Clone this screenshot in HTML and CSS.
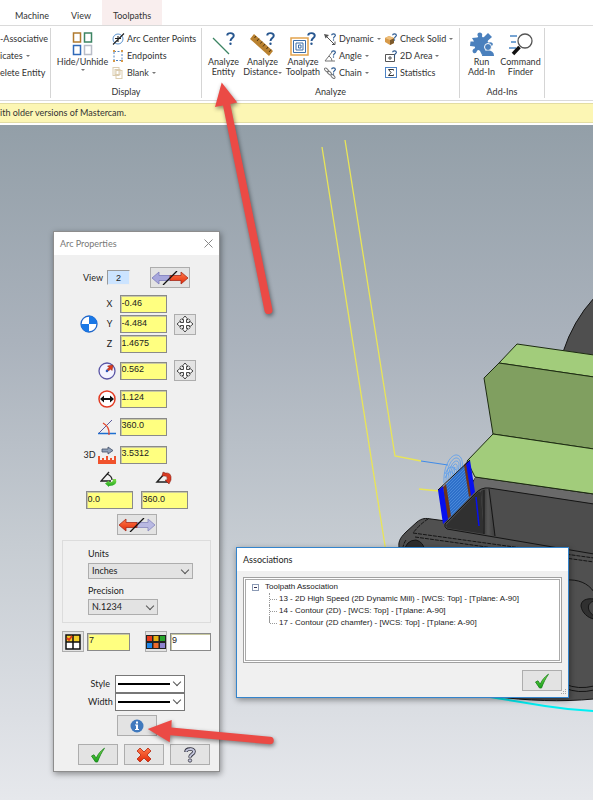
FILE: index.html
```html
<!DOCTYPE html>
<html lang="en">
<head>
    <meta charset="UTF-8">
    <meta name="viewport" content="width=device-width, initial-scale=1.0">
    <title>Mastercam - Arc Properties</title>
    <link rel="stylesheet" href="styles.css">
</head>
<body>
<!-- shared icons -->
<svg class="defs" width="0" height="0" aria-hidden="true">
    <defs>
        <linearGradient id="green" x1="0" y1="0" x2="0" y2="1">
            <stop offset="0" stop-color="#7fe04a"/><stop offset="1" stop-color="#16a01a"/>
        </linearGradient>
        <linearGradient id="red" x1="0" y1="0" x2="0" y2="1">
            <stop offset="0" stop-color="#ff7a4a"/><stop offset="1" stop-color="#e32a08"/>
        </linearGradient>
        <symbol id="question" viewBox="0 0 8 12">
            <path d="M1 3.2C1 0.4 7 0.2 7 3.4C7 5.4 4 5.6 4 8.2" fill="none" stroke="#27568f" stroke-width="1.8"/>
            <circle cx="4" cy="10.8" r="1.1" fill="#27568f"/>
        </symbol>
        <symbol id="check" viewBox="0 0 16 16">
            <path d="M1.5 9L4 7.8L6.2 11.2C8 7 10.500 4 14.500 1.200C11.500 5.500 9.500 9.500 7.500 15L5.500 15Z" fill="url(#green)" stroke="#17801a" stroke-width="0.8"/>
        </symbol>
        <symbol id="move" viewBox="0 0 18 18">
            <path d="M9 1L12 4.500H10.500V7.500H13.500V6L17 9L13.500 12V10.500H10.500V13.500H12L9 17L6 13.500H7.500V10.500H4.500V12L1 9L4.500 6V7.500H7.500V4.500H6Z" fill="#fff" stroke="#333" stroke-width="0.9"/>
            <path d="M3.500 5.500L5.500 3.500M12.500 3.500L14.500 5.500M3.500 12.500L5.500 14.500M12.500 14.500L14.500 12.500" stroke="#555" stroke-width="0.8"/>
        </symbol>
    </defs>
</svg>

<nav class="tabs">
    <button type="button" class="tab">Machine</button>
    <button type="button" class="tab">View</button>
    <button type="button" class="tab active">Toolpaths</button>
</nav>

<div class="ribbon">
    <section class="group group-delete">
        <div class="tools">
            <div class="stack">
                <button type="button" class="small">-Associative</button>
                <button type="button" class="small">icates <i class="caret"></i></button>
                <button type="button" class="small">elete Entity</button>
            </div>
        </div>
    </section>

    <section class="group group-display">
        <div class="tools">
            <button type="button" class="big big-hide">
                <svg width="22" height="24" viewBox="0 0 22 24" fill="#fff" stroke-width="1.500">
                    <rect x="1.500" y="1" width="7" height="9" stroke="#b07a2e"/>
                    <rect x="12.500" y="1" width="7" height="9" stroke="#3c8463"/>
                    <rect x="1.500" y="13.500" width="7" height="9" stroke="#2f69b8"/>
                    <rect x="12.500" y="13.500" width="7" height="9" stroke="#b9bdc8"/>
                </svg>
                <span>Hide/Unhide</span>
                <i class="caret"></i>
            </button>
            <div class="stack">
                <button type="button" class="small">
                    <svg width="13" height="12" viewBox="0 0 13 12" fill="none">
                        <circle cx="6" cy="6" r="5" stroke="#5b93cf"/>
                        <path d="M1 11.500L12 0.500M3 5.500H9M6 3V9" stroke="#222" stroke-width="1.100"/>
                    </svg>
                    Arc Center Points
                </button>
                <button type="button" class="small">
                    <svg width="13" height="12" viewBox="0 0 13 12" fill="none">
                        <rect x="2" y="1.500" width="8" height="9" stroke="#4c82c4" stroke-dasharray="2 1.500"/>
                        <path d="M1 0h2v2H1zM9 0h2v2H9zM1 10h2v2H1zM9 10h2v2H9z" fill="#d79a4a"/>
                    </svg>
                    Endpoints
                </button>
                <button type="button" class="small">
                    <svg width="13" height="12" viewBox="0 0 13 12" fill="none" stroke="#dccdb0">
                        <rect x="1" y="0.500" width="6" height="8"/>
                        <rect x="4" y="3.500" width="6" height="8"/>
                        <rect x="3" y="2.500" width="5" height="5"/>
                    </svg>
                    Blank <i class="caret"></i>
                </button>
            </div>
        </div>
        <h2>Display</h2>
    </section>

    <section class="group group-analyze">
        <div class="tools">
            <button type="button" class="big">
                <svg width="28" height="24" viewBox="0 0 28 24">
                    <path d="M3 6L19 22" stroke="#3c8463" stroke-width="1.300"/>
                    <use href="#question" x="16" y="0" width="9" height="13"/>
                </svg>
                <span>Analyze<br>Entity</span>
            </button>
            <button type="button" class="big">
                <svg width="28" height="24" viewBox="0 0 28 24">
                    <path d="M5 2L24 19L20 24L1 7Z" fill="#b9812f"/>
                    <path d="M7 4L5.500 6M10 6.500L8 9M13 9.500L11.500 11.500M16 12L14 14.500M19 15L17.500 17M22 17.500L20 20" stroke="#4a3210"/>
                    <use href="#question" x="17" y="0" width="9" height="13"/>
                </svg>
                <span>Analyze<br>Distance<i class="caret"></i></span>
            </button>
            <button type="button" class="big big-toolpath">
                <svg width="28" height="24" viewBox="0 0 28 24" fill="none">
                    <rect x="2" y="6" width="17" height="17" fill="#fff" stroke="#e3a44e" stroke-width="1.500"/>
                    <path d="M4.500 8.500H16.500V20.500H4.500ZM7 11H14V18H7ZM9.500 13H12V16H9.500Z" stroke="#3d6ea8"/>
                    <use href="#question" x="18" y="0" width="9" height="13"/>
                </svg>
                <span>Analyze<br>Toolpath</span>
            </button>
            <div class="stack stack-motion">
                <button type="button" class="small">
                    <svg width="13" height="12" viewBox="0 0 13 12">
                        <path d="M0 1L5 2L1.500 5.500Z" fill="#555"/>
                        <path d="M2 3L10 11M8 11.500H11V8.500" fill="none" stroke="#555"/>
                        <use href="#question" x="7" y="0" width="5" height="8"/>
                    </svg>
                    Dynamic <i class="caret"></i>
                </button>
                <button type="button" class="small">
                    <svg width="13" height="12" viewBox="0 0 13 12">
                        <path d="M8 2L1 11H11M5 6Q8 8 8 11" fill="none" stroke="#777"/>
                        <use href="#question" x="7" y="0" width="5" height="8"/>
                    </svg>
                    Angle <i class="caret"></i>
                </button>
                <button type="button" class="small">
                    <svg width="13" height="12" viewBox="0 0 13 12">
                        <g fill="none" stroke="#777">
                            <ellipse cx="2.500" cy="3" rx="2.500" ry="1.300" transform="rotate(45 2.500 3)"/>
                            <ellipse cx="5.500" cy="6" rx="2.500" ry="1.300" transform="rotate(45 5.500 6)"/>
                            <ellipse cx="9" cy="9.500" rx="2.500" ry="1.300" transform="rotate(45 9 9.500)"/>
                        </g>
                        <use href="#question" x="7" y="0" width="5" height="8"/>
                    </svg>
                    Chain <i class="caret"></i>
                </button>
            </div>
            <div class="stack">
                <button type="button" class="small">
                    <svg width="13" height="12" viewBox="0 0 13 12">
                        <path d="M0 5L4 3L9 5V10L5 12L0 9Z" fill="#d79a4a"/>
                        <path d="M5 7L9 5V10L5 12Z" fill="#7d5a2c"/>
                        <path d="M0 5L4 3L9 5L5 7Z" fill="#eebf7c"/>
                        <use href="#question" x="7" y="0" width="5" height="8"/>
                    </svg>
                    Check Solid <i class="caret"></i>
                </button>
                <button type="button" class="small">
                    <svg width="13" height="12" viewBox="0 0 13 12">
                        <path d="M0.500 4.500H9.500V11.500H0.500ZM5 6V10M3 8H7" fill="none" stroke="#555"/>
                        <use href="#question" x="7" y="0" width="5" height="8"/>
                    </svg>
                    2D Area <i class="caret"></i>
                </button>
                <button type="button" class="small">
                    <svg width="13" height="12" viewBox="0 0 13 12" fill="none">
                        <rect x="0.500" y="0.500" width="11" height="10" stroke="#4c82c4"/>
                        <path d="M8.500 3.500V2.500H3.500L6 5.500L3.500 8.500H8.500V7.500" stroke="#333"/>
                    </svg>
                    Statistics
                </button>
            </div>
        </div>
        <h2>Analyze</h2>
    </section>

    <section class="group group-addins">
        <div class="tools">
            <button type="button" class="big">
                <svg width="26" height="24" viewBox="0 0 26 24" fill="#4a80bd">
                    <path d="M3 6L8 5.500Q10 5 8.500 3.500Q8 0.500 11 0.500Q14 1 13 4Q13 6 15 5L19 1L23 5L19 8.500Q18 10.500 20 10.500Q23 9.500 24 12L23 14L18 14L16 20L13 23L11 19Q9 17 8 19Q7 22 4.500 21Q2.500 19 4.500 17Q7 16 5.500 14.500L1 14L1.500 9.500L5 9.500Z"/>
                    <circle cx="19" cy="15" r="3.500" stroke="#fff"/>
                    <path d="M13 24Q13 18.500 19 18.500Q25 18.500 25 24Z"/>
                </svg>
                <span>Run<br>Add-In</span>
            </button>
            <button type="button" class="big">
                <svg width="26" height="24" viewBox="0 0 26 24" fill="none">
                    <path d="M2 4H9M3 10H8M1 16H8" stroke="#4a86c5" stroke-width="1.500"/>
                    <circle cx="17" cy="9" r="7" fill="#fff" stroke="#555" stroke-width="1.300"/>
                    <path d="M11.500 15L5 22" stroke="#111" stroke-width="3.500"/>
                </svg>
                <span>Command<br>Finder</span>
            </button>
        </div>
        <h2>Add-Ins</h2>
    </section>
</div>

<p class="message">ith older versions of Mastercam.</p>

<main class="viewport">
    <svg class="scene" viewBox="0 125 593 675" preserveAspectRatio="xMinYMin slice" aria-hidden="true">
        <defs>
            <linearGradient id="bore" x1="0" x2="1">
                <stop offset="0" stop-color="#2b2b2b"/><stop offset="0.500" stop-color="#565656"/><stop offset="1" stop-color="#3d3d3d"/>
            </linearGradient>
            <pattern id="passes" width="3" height="3" patternUnits="userSpaceOnUse">
                <rect width="3" height="3" fill="#2d6fc9"/>
                <path d="M0 3L3 0" stroke="#5592e0" stroke-width="0.700"/>
            </pattern>
        </defs>
        <g fill="none" stroke="#e9e557" stroke-width="1.300">
            <path d="M322 147L386 552"/>
            <path d="M345 140L395 456L421 461"/>
            <path d="M419 489L439 491"/>
        </g>
        <path d="M421 461L448 465" stroke="#3f8be8"/>

        <g stroke="#151515" stroke-width="1">
            <path d="M594 298Q573 321 563 352L594 358Z" fill="#4f4f4f"/>
            <!-- casting -->
            <path d="M400 552C397 542 400 538 406 532L417 522C422 518 426 518 431 519L446 521L476 477L594 494V699C560 702 530 701 490 696L420 680Z" fill="#505050"/>
            <path d="M475 477L594 494V504L488 488Q481 487 476 492L470 497Z" fill="#6a6a6a" stroke="none"/>
            <path d="M445 524L475 494Q481 487 489 488L594 504V554L447 529Q444 527 445 524Z" fill="#4d4d4d"/>
            <path d="M446 525L476 494Q482 488 481 497L484 534L447 528Z" fill="#303030" stroke="none"/>
            <path d="M481 491Q486 487 491 490L495 536L484 534Z" fill="url(#bore)" stroke="none"/>
            <path d="M476 477L594 494M489 489L495 536M484 490L484 534" fill="none"/>
            <path d="M406 540Q402 546 403 552M413 533L594 558M415 537L594 562M428 519Q420 524 413 533" fill="none" stroke-dasharray="4 1"/>
            <path d="M404 552Q406 540 416 540Q424 542 425 552" fill="#2d2d2d"/>
            <path d="M565 580C578 579 588 583 594 592" fill="none"/>
            <path d="M594 599C587 598 581 600 581 606C582 613 588 618 594 619" fill="#303030"/>
            <path d="M594 601C587 603 586 610 594 616" fill="#494949"/>
            <path d="M565 684Q578 690 594 686M565 688Q578 694 594 690" fill="none"/>
        </g>

        <g stroke="#1d2b12" stroke-width="1">
            <path d="M517 344L594 355V377L499 363Z" fill="#a2cc7b"/>
            <path d="M499 363L594 377V449L493 434L484 378Z" fill="#809f60"/>
            <path d="M493 434L594 449V494L475 477L467 461Z" fill="#a2cc7b"/>
        </g>

        <!-- tool motion -->
        <g fill="none" stroke="#559cf0" stroke-width="0.800">
            <path d="M444 483C443 466 451 454 457 455C462 456 463 462 462 469"/>
            <path d="M446 482C446 468 452 457 457 458C461 459 461 464 460 471"/>
            <path d="M448 480C448 470 453 460 457 461C460 462 459 466 458 472"/>
            <path d="M450 478C450 470 454 463 456 464C458 465 457 469 456 474"/>
            <path d="M452 477C452 471 454 467 455 467L454 475"/>
            <path d="M445 474Q450 462 456 470M445 478Q449 468 454 474"/>
        </g>
        <path d="M443 487L467 462L473 494L448 520Z" fill="url(#passes)"/>
        <path d="M443 487L446 484L451 516L447 520ZM464 465L467 462L473 494L469 497Z" fill="#703418"/>
        <path d="M438 490L443 486L448 519L443 524ZM466 463L470 460L475 492L471 496Z" fill="#0710ee"/>
        <path d="M438 490L470 460" stroke="#111"/>
        <path d="M476 497L479 526" stroke="#0710ee" stroke-width="1.500"/>
        <path d="M490 697Q520 702 545 706T594 711" fill="none" stroke="#00f0f4" stroke-width="2"/>
    </svg>

    <form class="window arc-window">
        <header class="titlebar">
            <h1>Arc Properties</h1>
            <button type="button" class="close" aria-label="Close">
                <svg width="9" height="9" viewBox="0 0 9 9"><path d="M0.500 0.500L8.500 8.500M8.500 0.500L0.500 8.500" stroke="#888"/></svg>
            </button>
        </header>

        <div class="arc-body">
            <div class="view-row">
                <label for="view">View</label>
                <input class="view-input" id="view" value="2" readonly>
                <button type="button" class="btn" aria-label="Flip direction">
                    <svg width="38" height="14" viewBox="0 0 38 14">
                        <path d="M1 7L8 1V4.500H20V9.500H8V13Z" fill="#a7a7dc" stroke="#7b7bbb" stroke-width="0.800"/>
                        <path d="M37 7L30 1V4.500H19V9.500H30V13Z" fill="url(#red)" stroke="#a52a1a" stroke-width="0.800"/>
                        <path d="M12 14L26 0" stroke="#111" stroke-width="1.300"/>
                    </svg>
                </button>
            </div>

            <div class="fields">
                <svg class="origin" width="18" height="18" viewBox="0 0 18 18">
                    <circle cx="9" cy="9" r="8" fill="#fff" stroke="#1f66c9" stroke-width="1.300"/>
                    <path d="M9 9V1A8 8 0 0 1 17 9ZM9 9V17A8 8 0 0 1 1 9Z" fill="#1a78e6"/>
                </svg>
                <label class="axis" for="x">X</label>
                <input id="x" value="-0.46">
                <label class="axis" for="y">Y</label>
                <input id="y" value="-4.484">
                <label class="axis" for="z">Z</label>
                <input id="z" value="1.4675">
                <button type="button" class="btn btn-square move-point" aria-label="Move point">
                    <svg width="18" height="18"><use href="#move"/></svg>
                </button>
            </div>

            <div class="fields measures">
                <svg class="mark" width="18" height="18" viewBox="0 0 18 18">
                    <circle cx="9" cy="9" r="8" fill="#f4f4ff" stroke="#5a55a5" stroke-width="1.300"/>
                    <path d="M9 7.500L11 5.500L9.500 4L15 3L14 8.500L12.500 7L10.500 9Z" fill="#e03a1c" stroke="#81190c" stroke-width="0.500"/>
                    <circle cx="9" cy="9" r="1.300" fill="#3058b8"/>
                </svg>
                <input aria-label="Radius" value="0.562">
                <button type="button" class="btn btn-square" aria-label="Move radius">
                    <svg width="18" height="18"><use href="#move"/></svg>
                </button>

                <svg class="mark" width="18" height="18" viewBox="0 0 18 18">
                    <circle cx="9" cy="9" r="8" fill="#fff" stroke="#e23a22" stroke-width="1.500"/>
                    <path d="M2 9L6 5.500V8H12V5.500L16 9L12 12.500V10H6V12.500Z" fill="#111"/>
                </svg>
                <input aria-label="Diameter" value="1.124">

                <svg class="mark" width="18" height="18" viewBox="0 0 18 18" fill="none">
                    <path d="M0 15.500H18" stroke="#1e6fd0" stroke-width="1.500"/>
                    <path d="M1 15L14 2" stroke="#5d5a9c"/>
                    <path d="M5 5Q12 9 11 17" stroke="#e2442c" stroke-width="1.300"/>
                </svg>
                <input aria-label="Sweep angle" value="360.0">

                <label class="three-d" for="length">3D</label>
                <svg class="mark" width="18" height="18" viewBox="0 0 18 18">
                    <path d="M4 3H10V1L15 4.500L10 8V6H4Z" fill="#8fa0b8" stroke="#44506a" stroke-width="0.800"/>
                    <path d="M0 10H2V14H4V12H6V14H8V10H10V14H12V12H14V14H16V10H18V18H0Z" fill="#f0522c"/>
                </svg>
                <input id="length" value="3.5312">
            </div>

            <div class="angles">
                <div class="angle">
                    <svg width="18" height="16" viewBox="0 0 18 16">
                        <path d="M9 1L1 10H11M7 3Q12 5 12 9" fill="none" stroke="#222" stroke-width="1.300"/>
                        <path d="M16 8Q18 15 9 15L9 16L5 12.500L9 9.500V11Q13 12 13 8Z" fill="url(#green)"/>
                    </svg>
                    <input aria-label="Start angle" value="0.0">
                </div>
                <div class="angle">
                    <svg width="18" height="16" viewBox="0 0 18 16">
                        <path d="M10 2L2 11H13" fill="none" stroke="#222" stroke-width="1.500"/>
                        <path d="M7 5L8 1L10 2Q17 1 16 9L14 13L10 9H12Q13 5 10 5Z" fill="#d93a22" stroke="#7c1b10" stroke-width="0.500"/>
                    </svg>
                    <input aria-label="End angle" value="360.0">
                </div>
            </div>

            <button type="button" class="btn" aria-label="Reverse ends">
                <svg width="38" height="14" viewBox="0 0 38 14">
                    <path d="M37 7L30 1V4.500H18V9.500H30V13Z" fill="#b9b9e2" stroke="#8686bd" stroke-width="0.800"/>
                    <path d="M1 7L8 1V4.500H19V9.500H8V13Z" fill="url(#red)" stroke="#a52a1a" stroke-width="0.800"/>
                    <path d="M12 14L26 0" stroke="#111" stroke-width="1.300"/>
                </svg>
            </button>

            <fieldset class="options">
                <label for="units">Units</label>
                <div class="select select-units">
                    <select id="units"><option>Inches</option></select>
                </div>
                <label for="precision">Precision</label>
                <div class="select select-precision">
                    <select id="precision"><option>N.1234</option></select>
                </div>
            </fieldset>

            <div class="attributes">
                <button type="button" class="btn btn-square" aria-label="Level">
                    <svg width="16" height="16" viewBox="0 0 16 16">
                        <rect x="1" y="1" width="14" height="14" fill="#fff"/>
                        <path d="M1 1H15V8H1Z" fill="#f3cf2a"/>
                        <path d="M1 1H15V15H1ZM8 1V15M1 8H15" fill="none" stroke="#111" stroke-width="1.500"/>
                        <path d="M2 4L4 6L7 2" fill="none" stroke="#e2341c" stroke-width="1.800"/>
                    </svg>
                </button>
                <input aria-label="Level number" value="7">
                <button type="button" class="btn btn-square" aria-label="Color">
                    <svg width="20" height="14" viewBox="0 0 20 14">
                        <rect width="20" height="14" fill="#222"/>
                        <path d="M1 1h5v5H1z" fill="#e93a1c"/><path d="M7.500 1h5v5h-5z" fill="#e8b414"/><path d="M14 1h5v5h-5z" fill="#27a52b"/>
                        <path d="M1 8h5v5H1z" fill="#1f86e8"/><path d="M7.500 8h5v5h-5z" fill="#ee6a2a"/><path d="M14 8h5v5h-5z" fill="#8d83cf"/>
                    </svg>
                </button>
                <input class="plain" aria-label="Color number" value="9">
            </div>

            <div class="lines">
                <label for="style">Style</label>
                <div class="select select-line"><select id="style"><option></option></select></div>
                <label for="width">Width</label>
                <div class="select select-line"><select id="width"><option></option></select></div>
            </div>

            <button type="button" class="btn" aria-label="Associations">
                <svg width="14" height="14" viewBox="0 0 14 14">
                    <circle cx="7" cy="7" r="6.500" fill="#4079bd"/>
                    <path d="M6 2.500H8V4.500H6ZM5 5.500H8V10H9V11H5V10H6V6.500H5Z" fill="#fff"/>
                </svg>
            </button>

            <div class="actions">
                <button type="button" class="btn" aria-label="OK"><svg width="16" height="16"><use href="#check"/></svg></button>
                <button type="button" class="btn" aria-label="Cancel">
                    <svg width="16" height="16" viewBox="0 0 16 16">
                        <path d="M4 1L8 5L12 1L15 4L11 8L15 12L12 15L8 11L4 15L1 12L5 8L1 4Z" fill="url(#red)" stroke="#b5260f" stroke-width="0.800"/>
                    </svg>
                </button>
                <button type="button" class="btn" aria-label="Help">
                    <svg width="14" height="16" viewBox="0 0 14 16">
                        <path d="M3 5C3 1 11 1 11 4.500C11 7.500 7 7 7 10.500" fill="none" stroke="#33333f" stroke-width="3.600"/>
                        <path d="M3 4.700C3.500 1.300 11 1.300 11 4.500C11 7.500 7 7 7 10" fill="none" stroke="#c5c7dd" stroke-width="2"/>
                        <circle cx="7" cy="13.500" r="1.700" fill="#c5c7dd" stroke="#33333f" stroke-width="0.800"/>
                    </svg>
                </button>
            </div>
        </div>
    </form>

    <section class="window assoc-window">
        <header class="titlebar">
            <h1>Associations</h1>
        </header>
        <div class="assoc-body">
            <div class="tree">
                <div class="root"><i class="toggle"></i>Toolpath Association</div>
                <ul>
                    <li>13 - 2D High Speed (2D Dynamic Mill) - [WCS: Top] - [Tplane: A-90]</li>
                    <li>14 - Contour (2D) - [WCS: Top] - [Tplane: A-90]</li>
                    <li>17 - Contour (2D chamfer) - [WCS: Top] - [Tplane: A-90]</li>
                </ul>
            </div>
            <button type="button" class="btn" aria-label="OK"><svg width="16" height="16"><use href="#check"/></svg></button>
        </div>
        <svg class="grip" width="7" height="7" viewBox="0 0 7 7" fill="#a5a5a5">
            <path d="M5 0h1v1H5zM3 2h1v1H3zM5 2h1v1H5zM1 4h1v1H1zM3 4h1v1H3zM5 4h1v1H5z"/>
        </svg>
    </section>
</main>

<!-- callout arrows -->
<svg class="callouts" width="593" height="800" viewBox="0 0 593 800" fill="#eb4a45" aria-hidden="true">
    <path d="M221.700 82.500L237.300 102.500L230.300 104L272.300 309A4 4 0 0 1 264.500 311L223 105.500L215 107Z"/>
    <path d="M147.700 729L171.700 720L171.400 727.500L270 736.700A3.800 3.800 0 0 1 270 744.300L170.300 735.300L169.700 742.300Z"/>
</svg>
</body>
</html>
```
FILE: styles.css
```css
* {
    box-sizing: border-box;
}

body {
    margin: 0;
    min-height: 100vh;
    display: flex;
    flex-direction: column;
    position: relative;
    overflow-x: hidden;
    background-color: #fff;
    color: #333;
    font-family: Lato, "Open Sans", sans-serif;
    font-size: 9px;
    line-height: 10px;
}

.defs {
    position: absolute;
}

h1, h2, p, ul {
    margin: 0;
    padding: 0;
    font-size: inherit;
    font-weight: normal;
}

button, input, select {
    font: inherit;
    color: inherit;
    margin: 0;
    padding: 0;
    border: none;
    border-radius: 0;
    background: none;
}

svg {
    display: block;
    flex: none;
}

/* ribbon */
.tabs {
    display: flex;
    height: 26px;
    border-bottom: 1px solid #dadada;
}

.tab {
    padding: 7px 11px 0;
}

.tab:first-child {
    margin-left: 4px;
}

.tab.active {
    background-color: #f9eeee;
}

.ribbon {
    display: flex;
    height: 75px;
    padding: 2px 0;
    border-bottom: 1px solid #dadada;
}

.group {
    display: flex;
    flex-direction: column;
    justify-content: space-between;
    flex: none;
    height: 70px;
    padding-bottom: 1px;
    border-right: 1px solid #d5d5d5;
}

.group h2 {
    text-align: center;
}

.group-delete {
    width: 51px;
}

.group-display {
    width: 151px;
}

.group-analyze {
    width: 258px;
}

.group-addins {
    width: 85px;
}

.tools {
    display: flex;
    padding-top: 2px;
}

.group-display .tools {
    padding-left: 4px;
    gap: 2px;
}

.group-analyze .tools,
.group-addins .tools {
    padding-left: 2px;
}

.big {
    width: 39px;
    height: 52px;
    padding-top: 2px;
    display: flex;
    flex-direction: column;
    align-items: center;
    justify-content: flex-start;
    gap: 1px;
    white-space: nowrap;
}

.big-hide {
    width: 55px;
}

.big-toolpath {
    width: 42px;
}

.stack {
    display: flex;
    flex-direction: column;
    align-items: flex-start;
}

.stack-motion {
    width: 61px;
}

.small {
    display: flex;
    align-items: center;
    gap: 2px;
    height: 17px;
    white-space: nowrap;
}

.caret {
    display: inline-block;
    border: 2px solid transparent;
    border-top-color: #777;
    border-bottom: none;
    vertical-align: middle;
}

.small .caret {
    margin-left: 1px;
}

.big > .caret {
    margin-top: 1px;
}

.message {
    margin: 3px 0;
    height: 18px;
    line-height: 18px;
    background-color: #fcf6b4;
    outline: 1px solid #e3dda3;
}

/* graphics area */
.viewport {
    flex: 1;
    min-height: 675px;
    position: relative;
    overflow: hidden;
    background-image: linear-gradient(#939fa8, #aab2bc 32%, #c6ccd2 62%, #dcdfe4 88%, #e6e8ec);
    color: #222;
}

.scene {
    position: absolute;
    width: 100%;
    height: 100%;
}

.window {
    position: absolute;
    background-color: #f0f0f0;
    border: 1px solid #8d8d8d;
    box-shadow: 1px 2px 6px rgba(0, 0, 0, 0.4);
}

.titlebar {
    display: flex;
    align-items: center;
    justify-content: space-between;
    height: 23px;
    padding: 0 6px;
    background-color: #fff;
}

.arc-window {
    left: 53px;
    top: 106px;
    width: 167px;
}

.arc-window .titlebar {
    color: #777;
}

.arc-body {
    display: flex;
    flex-direction: column;
    align-items: center;
    padding: 12px 8px 6px;
}

.arc-body input {
    width: 47px;
    height: 18px;
    padding: 0 1px 3px;
    background-color: #ffff80;
    border: 1px solid #8a8a8a;
    box-shadow: inset 1px 1px #c9c9a0;
    font-family: "Liberation Sans", Arial, sans-serif;
}

.btn {
    display: flex;
    align-items: center;
    justify-content: center;
    width: 40px;
    height: 21px;
    background-color: #e3e3e3;
    border: 1px solid #adadad;
}

.btn-square {
    width: 22px;
}

.view-row {
    display: flex;
    align-items: center;
    gap: 4px;
    margin-bottom: 7px;
}

.arc-body .view-input {
    width: 23px;
    height: 15px;
    margin-right: 16px;
    padding: 0;
    text-align: center;
    background-color: #cce4ff;
    border-color: #9a9a9a #eee #eee #9a9a9a;
    box-shadow: none;
}

.fields {
    display: grid;
    grid-template-columns: 18px 22px 54px 22px;
    row-gap: 2px;
    align-items: center;
    margin: 0 0 7px 2px;
}

.fields .origin {
    grid-column: 1;
    grid-row: 1 / 4;
}

.axis {
    grid-column: 2;
    text-align: center;
    padding-left: 2px;
}

.fields input {
    grid-column: 3;
}

.fields .btn {
    grid-column: 4;
}

.fields .move-point {
    grid-row: 1 / 4;
}

.measures {
    grid-auto-rows: 21px;
    row-gap: 7px;
    margin-bottom: 6px;
}

.mark {
    grid-column: 2;
}

.three-d {
    grid-column: 1;
    padding-left: 4px;
}

.angles {
    display: flex;
    gap: 8px;
    margin-bottom: 5px;
}

.angle {
    display: flex;
    flex-direction: column;
    align-items: center;
    gap: 4px;
}

.options {
    align-self: stretch;
    display: flex;
    flex-direction: column;
    align-items: flex-start;
    margin: 5px 0 8px;
    padding: 8px 0 7px 25px;
    border: 1px solid #dcdcdc;
}

.select {
    position: relative;
}

.select select {
    display: block;
    width: 100%;
    height: 16px;
    padding: 0 3px;
    appearance: none;
    background-color: #e3e3e3;
    border: 1px solid #adadad;
}

.select::after {
    content: "";
    position: absolute;
    right: 5px;
    top: 4px;
    width: 5px;
    height: 5px;
    border: solid #555;
    border-width: 0 1px 1px 0;
    transform: rotate(45deg);
}

.select-units {
    width: 105px;
    margin: 4px 0 7px;
}

.select-precision {
    width: 70px;
    margin-top: 3px;
}

.attributes {
    display: flex;
    align-items: center;
    gap: 3px;
    margin-bottom: 23px;
}

.attributes input {
    width: 43px;
}

.attributes input + .btn {
    margin-left: 12px;
}

.attributes .plain {
    width: 41px;
    background-color: #fff;
}

.lines {
    display: grid;
    grid-template-columns: 22px 70px;
    column-gap: 5px;
    align-items: center;
    text-align: right;
    margin-bottom: 4px;
}

.lines .select-line select {
    height: 18px;
    background-color: #fff;
    border-color: #777;
}

.select-line::before {
    content: "";
    position: absolute;
    left: 3px;
    top: 8px;
    width: 52px;
    height: 2px;
    background-color: #000;
}

.actions {
    display: flex;
    gap: 6px;
    margin: 8px 0 0 14px;
}

.assoc-window {
    left: 236px;
    top: 422px;
    width: 333px;
    border-color: #3484cc;
}

.assoc-body {
    display: flex;
    flex-direction: column;
    align-items: flex-end;
    gap: 7px;
    padding: 6px;
}

.assoc-window .titlebar {
    color: #222;
}

.tree {
    align-self: stretch;
    height: 86px;
    padding: 3px 8px;
    background-color: #fff;
    border: 1px solid #a0a0a0;
    box-shadow: inset 0 0 0 1px #fff, inset 0 0 0 2px #aaa;
    font-family: "Liberation Sans", Arial, sans-serif;
    font-size: 8px;
    line-height: 12px;
}

.root {
    display: flex;
    align-items: center;
    gap: 6px;
}

.toggle {
    width: 7px;
    height: 7px;
    border: 1px solid #8b9ab5;
    background: linear-gradient(#335, #335) center / 3px 1px no-repeat;
}

.tree ul {
    list-style: none;
    margin-left: 17px;
}

.tree li {
    display: flex;
    gap: 2px;
    white-space: nowrap;
    border-left: 1px dotted #999;
}

.tree li:last-child {
    border-image: linear-gradient(#999 50%, transparent 50%) 1;
}

.tree li::before {
    content: "";
    width: 7px;
    height: 6px;
    border-bottom: 1px dotted #999;
}

.grip {
    position: absolute;
    right: 1px;
    bottom: 1px;
}

.callouts {
    position: absolute;
    left: 0;
    top: 0;
    pointer-events: none;
    filter: drop-shadow(1px 2px 2px rgba(0, 0, 0, 0.45));
}
```
